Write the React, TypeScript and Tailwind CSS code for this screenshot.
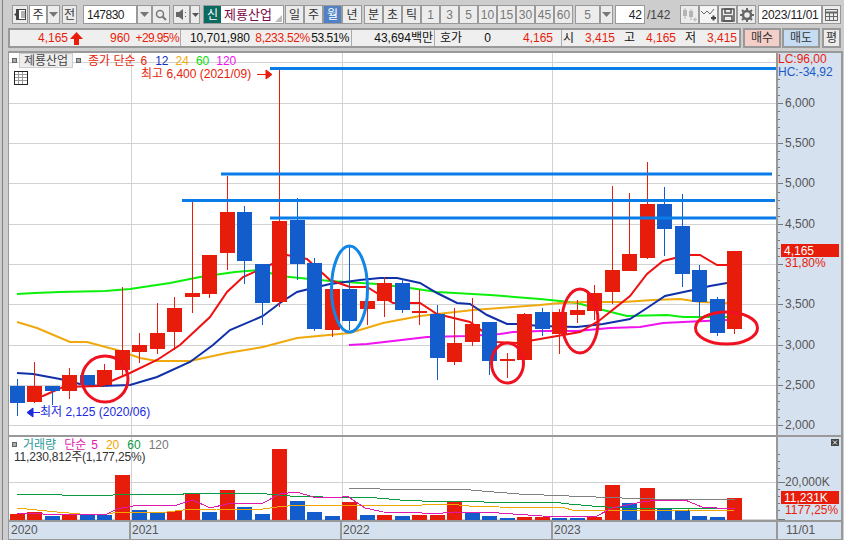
import React from 'react';

type Candle = [number, number, number, number, 'r' | 'b'];

// body top, body bottom, wick top, wick bottom (page pixels)
const candles: Candle[] = [
  [386, 403, 379, 416, 'b'], [386, 402, 362, 403, 'r'], [386, 391, 386, 405, 'b'], [375, 391, 368, 399, 'r'],
  [375, 385, 375, 385, 'b'], [370, 385, 364, 387, 'r'], [350, 370, 287, 375, 'r'], [345, 352, 333, 363, 'r'],
  [333, 349, 303, 354, 'r'], [308, 332, 297, 350, 'r'], [293, 297, 202, 313, 'r'], [255, 294, 255, 298, 'r'],
  [212, 253, 176, 270, 'r'], [212, 261, 206, 284, 'b'], [264, 303, 264, 325, 'b'], [221, 302, 68, 307, 'r'],
  [220, 264, 198, 280, 'b'], [263, 329, 258, 331, 'b'], [289, 330, 289, 337, 'r'], [289, 321, 246, 330, 'b'],
  [301, 309, 301, 325, 'r'], [283, 301, 277, 317, 'r'], [283, 310, 278, 313, 'b'], [311, 313, 290, 325, 'r'],
  [314, 358, 305, 380, 'b'], [343, 362, 308, 365, 'r'], [324, 342, 298, 346, 'r'], [322, 361, 322, 375, 'b'],
  [359, 361, 353, 378, 'r'], [314, 360, 313, 360, 'r'], [312, 329, 308, 336, 'b'], [312, 334, 309, 354, 'r'],
  [310, 315, 300, 323, 'r'], [293, 311, 285, 320, 'r'], [270, 292, 186, 304, 'r'], [254, 271, 193, 271, 'r'],
  [204, 258, 162, 259, 'r'], [204, 229, 187, 256, 'b'], [226, 274, 194, 287, 'b'], [270, 302, 265, 317, 'b'],
  [299, 333, 297, 336, 'b'], [251, 329, 251, 334, 'r'],
];

const volumes: [number, 'r' | 'b'][] = [
  [514, 'r'], [512, 'r'], [516, 'b'], [514, 'r'], [515, 'b'], [515, 'b'], [475, 'r'], [510, 'b'], [513, 'b'], [511, 'r'],
  [493, 'r'], [512, 'b'], [490, 'r'], [507, 'b'], [514, 'b'], [449, 'r'], [501, 'b'], [512, 'b'], [516, 'b'], [502, 'r'],
  [515, 'b'], [515, 'r'], [516, 'b'], [515, 'r'], [515, 'r'], [502, 'r'], [513, 'b'], [516, 'b'], [518, 'b'], [517, 'r'],
  [517, 'r'], [518, 'b'], [518, 'b'], [517, 'r'], [485, 'r'], [503, 'b'], [488, 'r'], [509, 'b'], [510, 'b'], [516, 'b'],
  [517, 'b'], [498, 'r'],
];

const ma6 = '27,397 43,396 63,387 100,386 130,373 157,360 180,345 210,317 227,292 243,277 270,265 287,255 307,259 330,280 350,287 367,287 393,303 420,303 437,314 470,322 497,342 517,343 540,339 580,332 600,320 630,296 647,274 663,261 687,255 700,255 717,265 728,265';
const ma12 = '17,373 33,374 60,379 80,384 100,386 130,385 157,377 190,362 213,345 230,330 263,316 280,303 297,292 313,288 330,284 360,280 380,278 397,278 420,283 437,293 457,303 470,304 487,315 507,324 517,324 540,326 577,327 603,324 630,319 647,308 665,296 693,290 710,286 727,283';
const ma24 = '17,322 37,328 70,342 87,342 117,350 140,358 157,361 190,361 227,353 263,347 297,338 350,333 383,323 420,316 473,310 513,307 540,305 560,303 583,302 623,302 653,300 680,299 700,302 727,303';
const ma60 = '17,294 35,293 60,292 105,291 130,289 170,283 200,277 235,272 260,270 280,276 330,281 377,284 410,288 437,292 490,295 540,299 560,301 577,303 603,310 627,316 667,315 683,317 727,317';
const ma120 = '349,345 367,344 393,341 427,337 467,336 500,334 513,332 540,331 577,331 610,328 640,327 663,323 683,322 727,320';

const volGreen = '17,494 60,494 62,495 113,495 115,494 183,494 183,493 253,493 267,494 290,496 323,497 377,498 400,500 422,501 482,501 484,502 552,502 569,504 592,506 622,508 735,508';
const volOrange = '17,508 37,510 57,512 80,514 107,514 120,512 167,512 183,510 217,509 263,509 277,507 300,505 422,505 449,504 469,506 499,507 565,508 572,510 629,510 635,511 689,510 692,511 735,510';
const volPink = '17,513 43,514 107,514 117,509 133,506 148,505 177,505 193,500 210,508 227,504 263,503 280,494 297,492 313,497 337,498 347,496 365,508 383,512 422,513 432,514 455,512 499,513 542,516 595,517 612,508 642,502 659,500 685,500 702,507 712,507 722,509 735,508';
const volGray = '349,488 377,488 380,489 459,489 482,491 519,494 569,496 622,498 655,499 735,499';

// 4,000 sits under the current price tag, so it has no label
const priceLabels = [
  ['6,000', 102], ['5,500', 142], ['5,000', 182], ['4,500', 223], ['3,500', 303], ['3,000', 344], ['2,500', 384], ['2,000', 424],
] as const;

const candleX = (i: number) => Math.round(16.5 + i * 17.51);
const RED = '#e81c0a';
const BLUE = '#125dcb';

const Btn = ({ w, bg = 'bg-[#ececec]', className = 'text-[#333]', children }: { w: string; bg?: string; className?: string; children?: React.ReactNode }) => (
  <div className={`${w} ${bg} h-[19px] shrink-0 flex items-center justify-center border border-[#999] ${className}`}>
    {children}
  </div>
);

const Caret = () => (
  <svg width="9" height="5" viewBox="0 0 9 5"><path d="M0 0h9L4.500 5z" fill="#777" /></svg>
);

const App = () => {
  return (
    <div className="relative w-[844px] h-[540px] overflow-hidden bg-[#cdcdcd] flex flex-col text-[12px] leading-none font-['Liberation_Sans','Noto_Sans_CJK_KR',sans-serif]">
      {/* Window edge */}
      <div className="absolute left-[2px] top-0 bottom-0 w-[1px] bg-[#808080]" />

      {/* Toolbar */}
      <div className="h-[25px] pt-[5px] pl-[12px] flex">
        <Btn w="w-[16px]">
          <svg width="12" height="13" viewBox="0 0 12 13">
            <rect x="3.500" y="1.500" width="8" height="10" fill="#fff" stroke="#444" />
            <path d="M5 1h-3v4l-2 1.500 2 1.500v4h3z" fill="#444" />
            <path d="M8 3v7M10 3v7" stroke="#666" />
          </svg>
        </Btn>
        <Btn w="w-[18px] ml-[1px]" bg="bg-white">주</Btn>
        <Btn w="w-[13px]"><Caret /></Btn>
        <Btn w="w-[15px] ml-[2px]">전</Btn>
        <div className="w-[54px] h-[19px] ml-[6px] shrink-0 flex items-center pl-[3px] border border-[#999] bg-white text-[#222] tracking-[-0.5px]">147830</div>
        <Btn w="w-[15px]"><Caret /></Btn>
        <Btn w="w-[18px]">
          <svg width="12" height="12" viewBox="0 0 12 12" fill="none" stroke="#777" strokeWidth="1.500">
            <circle cx="5" cy="5" r="3.500" /><path d="M7.500 7.500L11 11" strokeWidth="2" />
          </svg>
        </Btn>
        <Btn w="w-[17px] ml-[3px]">
          <svg width="12" height="11" viewBox="0 0 12 11"><path d="M0 3h3l4-3v11L3 8H0z" fill="#666" /><path d="M9 3h1v1H9zM9 7h1v1H9z" fill="#666" /></svg>
        </Btn>
        <Btn w="w-[10px]"><svg width="7" height="4" viewBox="0 0 7 4"><path d="M0 0h7L3.500 4z" fill="#555" /></svg></Btn>
        <div className="relative w-[81px] h-[19px] ml-[3px] shrink-0 flex items-center border border-[#999] bg-white">
          <div className="w-[17px] h-[17px] bg-[#0a6a60] text-white flex items-center justify-center">신</div>
          <span className="ml-[3px] text-[#7a0a4a] text-[13px]">제룡산업</span>
          <svg className="absolute right-[1px] bottom-[1px]" width="7" height="7" viewBox="0 0 7 7"><path d="M7 0v7H0z" fill="#bbb" /></svg>
        </div>
        <Btn w="w-[19px] ml-[1px]">일</Btn>
        <Btn w="w-[19px]">주</Btn>
        <Btn w="w-[19px]" bg="bg-[#4f81c4]" className="text-white">월</Btn>
        <Btn w="w-[20px]">년</Btn>
        <Btn w="w-[19px] ml-[2px]">분</Btn>
        <Btn w="w-[19px]">초</Btn>
        <Btn w="w-[19px]">틱</Btn>
        {['1', '3', '5', '10', '15', '30', '45', '60'].map((n) => (
          <Btn key={n} w="w-[19px]" className="text-[#777]">{n}</Btn>
        ))}
        <Btn w="w-[25px] ml-[2px]" className="text-[#777]">5</Btn>
        <Btn w="w-[13px]"><Caret /></Btn>
        <div className="w-[30px] h-[19px] ml-[2px] shrink-0 flex items-center justify-end pr-[2px] border border-[#999] bg-white text-[#222]">42</div>
        <span className="w-[24px] ml-[2px] h-[19px] flex items-center text-[#444]">/142</span>
        <Btn w="w-[19px] ml-[9px]">
          <svg width="15" height="14" viewBox="0 0 15 14" fill="#b4b4b4">
            <rect x="1" y="2" width="4" height="6" /><rect x="7" y="3" width="4" height="6" /><path d="M3 0v11M9 1v11" stroke="#b4b4b4" /><path d="M11 11h4v1h-4zM12.500 9.500h1v4h-1z" />
          </svg>
        </Btn>
        <Btn w="w-[19px]" bg="bg-[#f5f5f5]">
          <svg width="15" height="14" viewBox="0 0 15 14" fill="none" stroke="#666">
            <path d="M0 3l3 3 3-3 3 3 4-5" /><path d="M10 10h5M12.500 7.500v5" stroke="#444" strokeWidth="2" />
          </svg>
        </Btn>
        <Btn w="w-[19px]">
          <svg width="14" height="14" viewBox="0 0 14 14" fill="none" stroke="#555" strokeWidth="1.500">
            <rect x="1" y="1" width="12" height="12" /><rect x="4" y="1" width="6" height="4" /><rect x="3" y="8" width="8" height="5" />
          </svg>
        </Btn>
        <Btn w="w-[19px]">
          <svg width="14" height="14" viewBox="0 0 14 14">
            <circle cx="7" cy="7" r="4" fill="none" stroke="#666" strokeWidth="2.500" />
            <path d="M7 0v3M7 11v3M0 7h3M11 7h3M2 2l2 2M10 10l2 2M12 2l-2 2M4 10l-2 2" stroke="#666" strokeWidth="2" />
          </svg>
        </Btn>
        <div className="w-[64px] h-[19px] ml-[2px] shrink-0 flex items-center justify-center border border-[#999] bg-white text-[#222] whitespace-nowrap tracking-[-0.2px]">2023/11/01</div>
        <Btn w="w-[19px]">
          <svg width="13" height="12" viewBox="0 0 13 12" fill="none" stroke="#666">
            <rect x="0.500" y="0.500" width="12" height="11" /><path d="M0 3.500h13" strokeWidth="2" /><path d="M4.500 3v9M8.500 3v9M0 7.500h13" />
          </svg>
        </Btn>
      </div>

      {/* Quote row */}
      <div className="h-[26px] pt-[3px] pl-[8px] flex">
        <div className="w-[733px] h-[20px] flex items-center border-2 border-[#999] bg-[#efefef] text-[#e81c0a] whitespace-nowrap">
          <span className="w-[58px] text-right">4,165</span>
          <svg className="ml-[2px] mr-[2px]" width="13" height="13" viewBox="0 0 13 13"><path d="M6.500 0L13 7H9v6H4V7H0z" fill="#e81c0a" /></svg>
          <span className="w-[45px] text-right">960</span>
          <span className="w-[49px] text-right tracking-[-0.6px]">+29.95%</span>
          <div className="w-[1px] h-full ml-[1px] bg-[#aaa]" />
          <span className="w-[69px] text-right text-[#111]">10,701,980</span>
          <span className="w-[60px] text-right tracking-[-0.3px]">8,233.52%</span>
          <span className="w-[39px] text-right text-[#111] tracking-[-0.5px]">53.51%</span>
          <div className="w-[1px] h-full ml-[2px] bg-[#aaa]" />
          <span className="w-[81px] text-right text-[#111]">43,694백만</span>
          <div className="w-[1px] h-full ml-[1px] bg-[#aaa]" />
          <span className="w-[27px] text-right text-[#111]">호가</span>
          <span className="w-[29px] text-right text-[#111]">0</span>
          <span className="w-[62px] text-right">4,165</span>
          <div className="w-[1px] h-full ml-[8px] bg-[#aaa]" />
          <span className="w-[12px] text-right text-[#111]">시</span>
          <span className="w-[41px] text-right">3,415</span>
          <span className="w-[20px] text-right text-[#111]">고</span>
          <span className="w-[41px] text-right">4,165</span>
          <span className="w-[20px] text-right text-[#111]">저</span>
          <span className="w-[41px] text-right">3,415</span>
        </div>
        <Btn w="w-[38px] h-[20px] ml-[2px] border-2" bg="bg-[#f3cfc8]">매수</Btn>
        <Btn w="w-[38px] h-[20px] ml-[1px] border-2" bg="bg-[#c5dcf2]">매도</Btn>
        <Btn w="w-[19px] h-[20px] ml-[2px] border-2">평</Btn>
      </div>

      {/* Chart area */}
      <div className="relative w-[835px] h-[489px] ml-[8px] grid grid-cols-[767px_66px] grid-rows-[384px_85px_17px] border-t-2 border-l border-r-2 border-b-[1px] border-[#999] bg-[#d5e1ef]">
        {/* Price pane */}
        <div className="relative bg-white border-b-2 border-[#999] overflow-hidden">
          <svg className="absolute left-0 top-0" width="767" height="384" viewBox="9 53 767 384">
            <g stroke="#d2d2d2" shapeRendering="crispEdges">
              {[62, 103, 143, 183, 224, 264, 304, 345, 385, 425].map((y) => (
                <line key={y} x1="8" x2="776" y1={y + 0.5} y2={y + 0.5} />
              ))}
              {[131, 342, 552].map((x) => (
                <line key={x} x1={x + 0.5} x2={x + 0.5} y1="53" y2="437" />
              ))}
            </g>
            <g fill="none" strokeWidth="2">
              <polyline points={ma60} stroke="#0bf00b" />
              <polyline points={ma24} stroke="#efa90c" />
              <polyline points={ma120} stroke="#f012f0" />
              <polyline points={ma12} stroke="#1030aa" />
              <polyline points={ma6} stroke="#f01010" />
            </g>
            <g shapeRendering="crispEdges">
              {candles.map(([top, bottom, hi, lo, c], i) => {
                const x = candleX(i);
                const color = c === 'r' ? RED : BLUE;
                return (
                  <g key={i} fill={color}>
                    <rect x={x} y={hi} width="1" height={lo - hi} />
                    <rect x={x - 7} y={top} width="15" height={bottom - top} />
                  </g>
                );
              })}
            </g>
            <g stroke="#0a7ce8" strokeWidth="3">
              <line x1="270" x2="776" y1="68.500" y2="68.500" />
              <line x1="221" x2="772" y1="174" y2="174" />
              <line x1="182" x2="775" y1="200.500" y2="200.500" />
              <line x1="270" x2="777" y1="218" y2="218" />
            </g>
            <g fill="none" strokeWidth="3">
              <circle cx="105" cy="379" r="23" stroke="#f01020" />
              <ellipse cx="349.500" cy="289" rx="18" ry="43" stroke="#0f86e8" />
              <ellipse cx="507.500" cy="363" rx="16" ry="20" stroke="#f01020" />
              <ellipse cx="580" cy="321" rx="18" ry="32" stroke="#f01020" />
              <ellipse cx="726.500" cy="328" rx="31" ry="16" stroke="#f01020" />
            </g>
            <path d="M257 74.500h9M266 70l6 4.500-6 4.500z" fill="#e81c0a" stroke="#e81c0a" />
            <path d="M40 412.500h-8M33 408l-6 4.500 6 4.500z" fill="#1a2ae0" stroke="#1a2ae0" />
          </svg>

          {/* Legend over the chart */}
          <div className="absolute left-[3px] top-0 h-[15px] flex items-center whitespace-nowrap">
            <div className="w-[5px] h-[5px] border border-[#666] bg-[#aaa]" />
            <div className="ml-[2px] w-[54px] h-[15px] flex items-center justify-center bg-[#eee] border border-[#ccc] text-[#444]">제룡산업</div>
            <div className="ml-[3px] w-[5px] h-[5px] border border-[#666] bg-[#aaa]" />
            <span className="ml-[7px] text-[#e81c0a]">종가 단순</span>
            <span className="ml-[5px] text-[#e81c0a]">6</span>
            <span className="ml-[8px] text-[#1030c0]">12</span>
            <span className="ml-[7px] text-[#efa90c]">24</span>
            <span className="ml-[7px] text-[#0bdc0b]">60</span>
            <span className="ml-[7px] text-[#f012f0]">120</span>
          </div>
          <div className="absolute left-[132px] top-[15px] text-[#e81c0a] whitespace-nowrap">최고 6,400 (2021/09)</div>
          <div className="absolute left-[5px] top-[18px] w-[14px] h-[14px] border border-[#222] bg-white">
            <svg width="12" height="12" viewBox="0 0 12 12" fill="none" stroke="#999">
              <path d="M0 2.500h12M0 5.500h12M0 8.500h12M3.500 0v12M7.500 0v12" />
            </svg>
          </div>
          <div className="absolute left-[31px] top-[353px] text-[#1a2ae0] whitespace-nowrap">최저 2,125 (2020/06)</div>
        </div>

        {/* Price axis */}
        <div className="relative border-l-2 border-b-2 border-[#999] overflow-hidden">
          <svg className="absolute left-0 top-0" width="64" height="384" viewBox="778 53 64 384">
            <g stroke="#777" shapeRendering="crispEdges">
              {Array.from({ length: 44 }, (_, i) => 425 - i * 8.05).map((y, i) => (
                <line key={i} x1="778" x2={i % 5 === 0 ? 783 : 780} y1={Math.round(y) + 0.5} y2={Math.round(y) + 0.5} />
              ))}
            </g>
          </svg>
          <div className="absolute left-[0px] top-[0px] text-[#e81c0a] whitespace-nowrap">LC:96,00</div>
          <div className="absolute left-[0px] top-[13px] text-[#1a5ac8] whitespace-nowrap">HC:-34,92</div>
          {priceLabels.map(([label, y]) => (
            <div key={label} className="absolute left-[7px] text-[#555]" style={{ top: y - 58 }}>{label}</div>
          ))}
          <div className="absolute left-[3px] top-[191px] w-[58px] h-[13px] bg-[#e81c0a] text-white pl-[3px] flex items-center">4,165</div>
          <div className="absolute left-[7px] top-[204px] text-[#e81c0a]">31,80%</div>
        </div>

        {/* Volume pane */}
        <div className="relative bg-white border-b-2 border-[#999] overflow-hidden">
          <svg className="absolute left-0 top-0" width="767" height="85" viewBox="9 437 767 85">
            <g stroke="#d2d2d2" shapeRendering="crispEdges">
              <line x1="8" x2="776" y1="482.500" y2="482.500" />
              <line x1="8" x2="776" y1="519.500" y2="519.500" />
              {[131, 342, 552].map((x) => (
                <line key={x} x1={x + 0.5} x2={x + 0.5} y1="437" y2="521" />
              ))}
            </g>
            <g shapeRendering="crispEdges">
              {volumes.map(([top, c], i) => (
                <rect key={i} x={candleX(i) - 7} y={top} width="15" height={520 - top} fill={c === 'r' ? RED : BLUE} />
              ))}
            </g>
            <g fill="none" shapeRendering="crispEdges">
              <polyline points={volGray} stroke="#808080" />
              <polyline points={volGreen} stroke="#0a9a40" />
              <polyline points={volOrange} stroke="#f0a800" />
              <polyline points={volPink} stroke="#e018b0" />
            </g>
          </svg>
          <div className="absolute left-[3px] top-[1px] h-[13px] flex items-center whitespace-nowrap">
            <div className="w-[5px] h-[5px] border border-[#666] bg-[#aaa]" />
            <span className="ml-[6px] text-[#2a9a9a]">거래량</span>
            <span className="ml-[8px] text-[#e018b0]">단순</span>
            <span className="ml-[5px] text-[#e018b0]">5</span>
            <span className="ml-[8px] text-[#f0a800]">20</span>
            <span className="ml-[8px] text-[#0a9a40]">60</span>
            <span className="ml-[8px] text-[#777]">120</span>
          </div>
          <div className="absolute left-[5px] top-[14px] text-[#333] whitespace-nowrap tracking-[-0.2px]">11,230,812주(1,177,25%)</div>
        </div>

        {/* Volume axis */}
        <div className="relative border-l-2 border-b-2 border-[#999] overflow-hidden">
          <svg className="absolute left-0 top-0" width="64" height="85" viewBox="778 437 64 85">
            <g stroke="#777" shapeRendering="crispEdges">
              {[454, 461, 468, 475, 482, 489, 496, 503, 510, 519].map((y) => (
                <line key={y} x1="778" x2={y === 482 || y === 519 ? 785 : 780} y1={y + 0.5} y2={y + 0.5} />
              ))}
            </g>
          </svg>
          <div className="absolute left-[53px] top-[2px] w-[8px] h-[7px] bg-[#444]">
            <svg width="8" height="7" viewBox="0 0 8 7"><path d="M2 1.500l4 4M6 1.500l-4 4" stroke="#fff" /></svg>
          </div>
          <div className="absolute left-[7px] top-[39px] text-[#555]">20,000K</div>
          <div className="absolute left-[3px] top-[54px] w-[58px] h-[13px] bg-[#e81c0a] text-white pl-[3px] flex items-center">11,231K</div>
          <div className="absolute left-[7px] top-[67px] text-[#e81c0a]">1177,25%</div>
        </div>

        {/* Date axis */}
        <div className="flex text-[#555] overflow-hidden">
          <div className="w-[122px] pl-[2px] pt-[2px] border-r-2 border-[#999]">2020</div>
          <div className="w-[211px] pl-[1px] pt-[2px] border-r-2 border-[#999]">2021</div>
          <div className="w-[211px] pl-[1px] pt-[2px] border-r-2 border-[#999]">2022</div>
          <div className="w-[223px] pl-[1px] pt-[2px]">2023</div>
        </div>
        <div className="border-l-2 border-[#999] pl-[8px] pt-[2px] text-[#555]">11/01</div>
      </div>
    </div>
  );
};

export default App;
